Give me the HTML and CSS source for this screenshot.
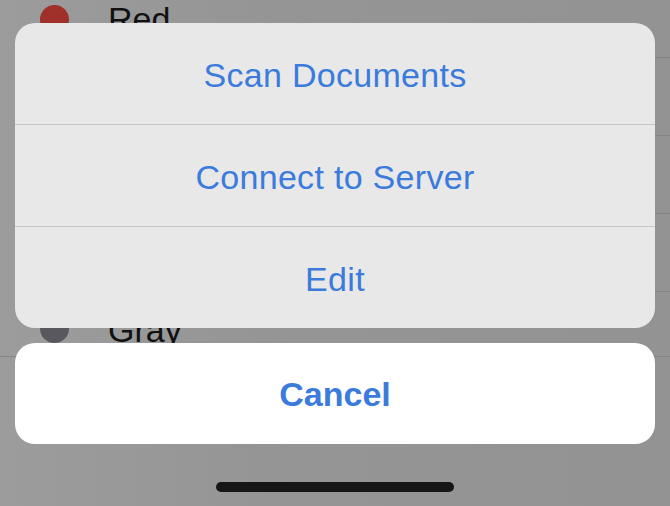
FILE: index.html
```html
<!DOCTYPE html>
<html>
<head>
<meta charset="utf-8">
<link rel="stylesheet" href="styles.css">
</head>
<body>
<div class="screen">
  <div class="list">
    <div class="row"><span class="dot red"></span><span class="label">Red</span></div>
    <div class="row"><span class="dot"></span><span class="label"></span></div>
    <div class="row"><span class="dot"></span><span class="label"></span></div>
    <div class="row"><span class="dot"></span><span class="label"></span></div>
    <div class="row last"><span class="dot gray"></span><span class="label">Gray</span></div>
  </div>

  <div class="sheet">
    <div class="group">
      <div class="action">Scan Documents</div>
      <div class="action">Connect to Server</div>
      <div class="action">Edit</div>
    </div>
    <div class="cancel">Cancel</div>
    <div class="home-wrap"><div class="home"></div></div>
  </div>
</div>
</body>
</html>
```

FILE: styles.css
```css
* { box-sizing: border-box; }
html, body {
  margin: 0;
  padding: 0;
  width: 670px;
  height: 506px;
  overflow: hidden;
}
body {
  background: #959595;
  font-family: "Liberation Sans", Arial, sans-serif;
}
.screen {
  position: relative;
  width: 670px;
  height: 506px;
  overflow: hidden;
  background: linear-gradient(90deg, #9c9c9c 0%, #959595 40%, #939393 100%);
}
.list {
  margin-top: -20px;
  display: flex;
  flex-direction: column;
}
.row {
  height: 78px;
  display: flex;
  align-items: center;
  padding-left: 40px;
  position: relative;
}
.row::after {
  content: "";
  position: absolute;
  left: 108px;
  right: 0;
  bottom: 0;
  height: 1px;
  background: #858585;
}
.row.last {
  height: 65px;
  align-items: flex-start;
  padding-top: 22px;
}
.row.last::after { left: 0; }
.dot {
  width: 29px;
  height: 29px;
  border-radius: 50%;
  flex: none;
}
.dot.red { background: #a0302a; }
.dot.gray { background: #58585e; }
.label {
  margin-left: 39px;
  font-size: 34px;
  color: #111;
  line-height: 39px;
}
.row.last .label { margin-top: -3px; }

.sheet {
  position: absolute;
  left: 15px;
  right: 15px;
  top: 23px;
  display: flex;
  flex-direction: column;
}
.group {
  background: #e8e8e8;
  border-radius: 20px;
  overflow: hidden;
  display: flex;
  flex-direction: column;
}
.action {
  height: 101px;
  padding-top: 3px;
  display: flex;
  align-items: center;
  justify-content: center;
  font-size: 34px;
  letter-spacing: 0.3px;
  color: #3a7bdc;
}
.action + .action {
  border-top: 1px solid #c6c6c6;
  height: 102px;
}
.cancel {
  margin-top: 15px;
  height: 101px;
  padding-top: 2px;
  background: #ffffff;
  border-radius: 20px;
  display: flex;
  align-items: center;
  justify-content: center;
  font-size: 34px;
  font-weight: bold;
  color: #3a7bdc;
}
.home-wrap {
  display: flex;
  justify-content: center;
  padding-top: 38px;
}
.home {
  width: 238px;
  height: 10px;
  border-radius: 5px;
  background: #161616;
}
```
